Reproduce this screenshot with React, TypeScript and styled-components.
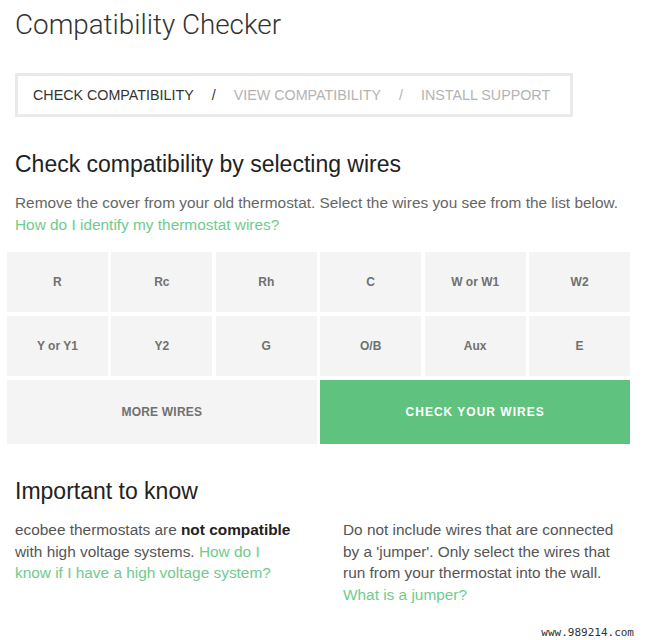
import React from 'react';
import styled, { createGlobalStyle } from 'styled-components';

const GlobalStyle = createGlobalStyle`
  html, body {
    margin: 0;
    padding: 0;
    background: #ffffff;
  }
  body {
    font-family: "Liberation Sans", Arial, sans-serif;
    color: #555;
  }
`;

const Page = styled.div`
  width: 648px;
  height: 640px;
  padding: 0 15px;
  box-sizing: border-box;
  overflow: hidden;
  position: relative;
`;

const Title = styled.h1`
  margin: 0;
  padding-top: 9px;
  font-family: Roboto, "Liberation Sans", sans-serif;
  font-weight: 300;
  font-size: 27.8px;
  line-height: 32px;
  color: #333;
`;

const Steps = styled.nav`
  margin-top: 32px;
  width: 558px;
  height: 44px;
  box-sizing: border-box;
  border: 3px solid #eaeaea;
  display: flex;
  align-items: center;
  padding-left: 15px;
  font-size: 14.3px;
  white-space: nowrap;
`;

const Step = styled.span<{ $active?: boolean }>`
  color: ${(p) => (p.$active ? '#333' : '#b3b3b3')};
`;

const Slash = styled.span<{ $dark?: boolean }>`
  color: ${(p) => (p.$dark ? '#333' : '#b3b3b3')};
  margin: 0 18px;
`;

const Heading = styled.h2`
  margin: 0;
  font-weight: 400;
  font-size: 23px;
  line-height: 26px;
  color: #222;
`;

const SelectHeading = styled(Heading)`
  margin-top: 34px;
`;

const Text = styled.p`
  margin: 0;
  font-size: 15.4px;
  line-height: 21.5px;
  color: #666;
`;

const Intro = styled(Text)`
  margin-top: 15px;
`;

const Link = styled.a`
  color: #6fcb8e;
  text-decoration: none;
  cursor: pointer;
`;

const WireGrid = styled.div`
  margin: 17px 0 0 -8px;
  width: 623px;
  display: grid;
  grid-template-columns: repeat(6, 1fr);
  grid-template-rows: 60px 60px 64px;
  gap: 4px 3.6px;
`;

const Wire = styled.button`
  border: 0;
  background: #f4f4f4;
  font-family: "Liberation Sans", Arial, sans-serif;
  font-weight: 700;
  font-size: 12px;
  color: #707070;
  padding: 0;
`;

const WideButton = styled.button<{ $primary?: boolean }>`
  grid-column: span 3;
  border: 0;
  background: ${(p) => (p.$primary ? '#5fc27f' : '#f4f4f4')};
  color: ${(p) => (p.$primary ? '#ffffff' : '#707070')};
  font-family: "Liberation Sans", Arial, sans-serif;
  font-weight: 700;
  font-size: 12px;
  letter-spacing: ${(p) => (p.$primary ? '1px' : '0.2px')};
  padding: 0;
`;

const ImportantHeading = styled(Heading)`
  margin-top: 34px;
`;

const Columns = styled.div`
  margin-top: 15px;
  display: grid;
  grid-template-columns: 328px 1fr;
`;

const Column = styled(Text)<{ $width: number }>`
  width: ${(p) => p.$width}px;
  color: #555;
`;

const Strong = styled.strong`
  color: #222;
`;

const Watermark = styled.div`
  position: absolute;
  right: 14px;
  bottom: 1px;
  font-family: "DejaVu Sans Mono", monospace;
  font-size: 11px;
  color: #333;
  background: #fff;
`;

const wires = ['R', 'Rc', 'Rh', 'C', 'W or W1', 'W2', 'Y or Y1', 'Y2', 'G', 'O/B', 'Aux', 'E'];

export default function App() {
  return (
    <>
      <GlobalStyle />
      <Page>
        <Title>Compatibility Checker</Title>
        <Steps>
          <Step $active>CHECK COMPATIBILITY</Step>
          <Slash $dark>/</Slash>
          <Step>VIEW COMPATIBILITY</Step>
          <Slash>/</Slash>
          <Step>INSTALL SUPPORT</Step>
        </Steps>

        <SelectHeading>Check compatibility by selecting wires</SelectHeading>
        <Intro>
          Remove the cover from your old thermostat. Select the wires you see from the list below.
          <br />
          <Link>How do I identify my thermostat wires?</Link>
        </Intro>

        <WireGrid>
          {wires.map((w) => (
            <Wire key={w}>{w}</Wire>
          ))}
          <WideButton>MORE WIRES</WideButton>
          <WideButton $primary>CHECK YOUR WIRES</WideButton>
        </WireGrid>

        <ImportantHeading>Important to know</ImportantHeading>
        <Columns>
          <Column $width={282}>
            ecobee thermostats are <Strong>not compatible</Strong> with high voltage systems.{' '}
            <Link>How do I know if I have a high voltage system?</Link>
          </Column>
          <Column $width={290}>
            Do not include wires that are connected by a 'jumper'. Only select the wires that run
            from your thermostat into the wall.
            <br />
            <Link>What is a jumper?</Link>
          </Column>
        </Columns>
        <Watermark>www.989214.com</Watermark>
      </Page>
    </>
  );
}
